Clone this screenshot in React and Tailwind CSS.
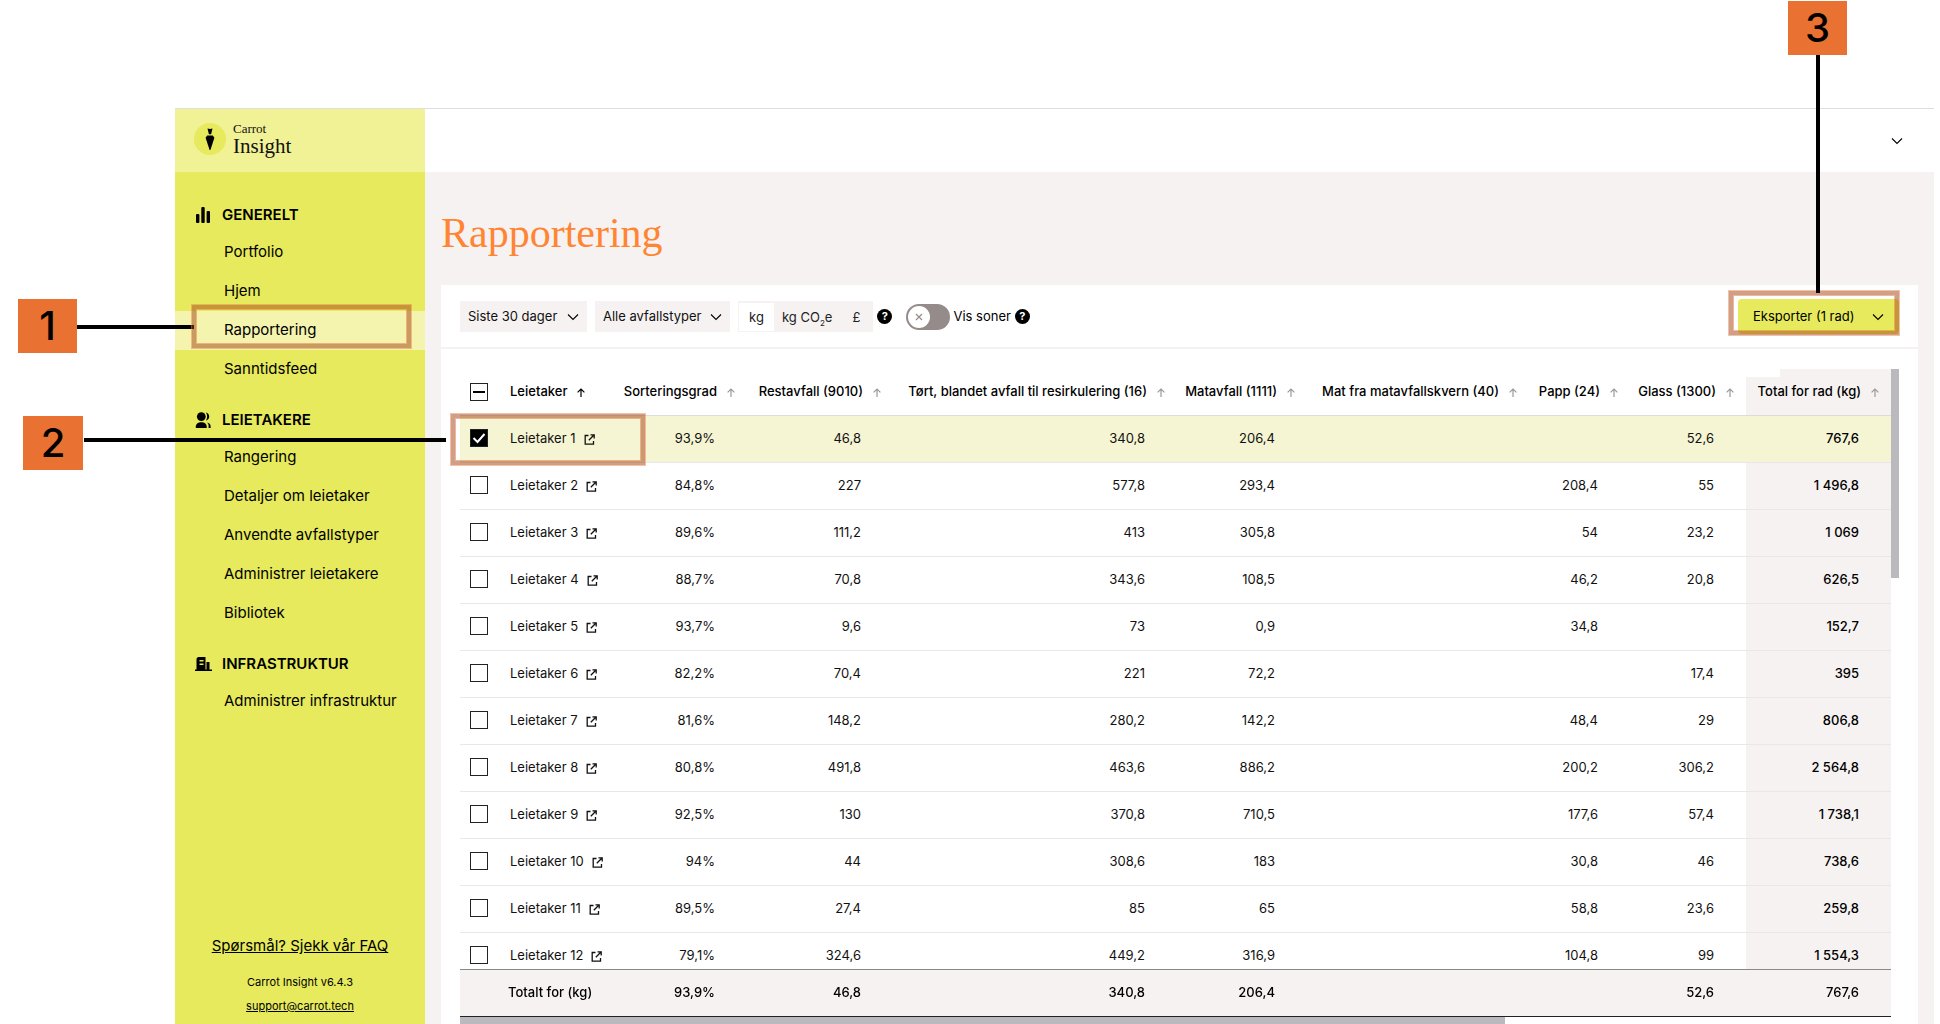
const menu = [
    {
        title: 'GENERELT',
        icon: ChartIcon,
        items: ['Portfolio', 'Hjem', 'Rapportering', 'Sanntidsfeed'],
    },
    {
        title: 'LEIETAKERE',
        icon: PeopleIcon,
        items: ['Rangering', 'Detaljer om leietaker', 'Anvendte avfallstyper', 'Administrer leietakere', 'Bibliotek'],
    },
    {
        title: 'INFRASTRUKTUR',
        icon: BuildingIcon,
        items: ['Administrer infrastruktur'],
    },
];

const columns = [
    'Sorteringsgrad',
    'Restavfall (9010)',
    'Tørt, blandet avfall til resirkulering (16)',
    'Matavfall (1111)',
    'Mat fra matavfallskvern (40)',
    'Papp (24)',
    'Glass (1300)',
    'Total for rad (kg)',
];

const rows = [
    ['Leietaker 1', '93,9%', '46,8', '340,8', '206,4', '', '', '52,6', '767,6'],
    ['Leietaker 2', '84,8%', '227', '577,8', '293,4', '', '208,4', '55', '1 496,8'],
    ['Leietaker 3', '89,6%', '111,2', '413', '305,8', '', '54', '23,2', '1 069'],
    ['Leietaker 4', '88,7%', '70,8', '343,6', '108,5', '', '46,2', '20,8', '626,5'],
    ['Leietaker 5', '93,7%', '9,6', '73', '0,9', '', '34,8', '', '152,7'],
    ['Leietaker 6', '82,2%', '70,4', '221', '72,2', '', '', '17,4', '395'],
    ['Leietaker 7', '81,6%', '148,2', '280,2', '142,2', '', '48,4', '29', '806,8'],
    ['Leietaker 8', '80,8%', '491,8', '463,6', '886,2', '', '200,2', '306,2', '2 564,8'],
    ['Leietaker 9', '92,5%', '130', '370,8', '710,5', '', '177,6', '57,4', '1 738,1'],
    ['Leietaker 10', '94%', '44', '308,6', '183', '', '30,8', '46', '738,6'],
    ['Leietaker 11', '89,5%', '27,4', '85', '65', '', '58,8', '23,6', '259,8'],
    ['Leietaker 12', '79,1%', '324,6', '449,2', '316,9', '', '104,8', '99', '1 554,3'],
];

const totals = ['93,9%', '46,8', '340,8', '206,4', '', '', '52,6', '767,6'];

function ChartIcon() {
    return (
        <svg viewBox="0 0 16 18" className="w-4 h-[18px]" aria-hidden="true">
            <rect x="1" y="8" width="3.4" height="9" rx="1" />
            <rect x="6.3" y="1" width="3.4" height="16" rx="1" />
            <rect x="11.6" y="5" width="3.4" height="12" rx="1" />
        </svg>
    );
}

function PeopleIcon() {
    return (
        <svg viewBox="0 0 16 18" className="w-4 h-[18px]" aria-hidden="true">
            <circle cx="6.3" cy="5.6" r="4.4" />
            <path d="M.8 17v-1.400C.8 12.600 3.500 11.200 6.300 11.200s5.400 1.400 5.400 4.400V17z" />
            <path d="M11 1.600c2 .4 3.200 2 3.200 4s-1.200 3.600-3.200 4c1.500-2.300 1.500-5.700 0-8z" />
            <path d="M12 11.600c2.200.5 3.600 1.500 3.600 3.400v2h-2v-2.400c0-1.200-.6-2.200-1.600-3z" />
        </svg>
    );
}

function BuildingIcon() {
    return (
        <svg viewBox="0 0 17 16" className="w-[17px] h-4 shrink-0" aria-hidden="true">
            <path
                fillRule="evenodd"
                d="M1.500 13.500V2.500L3 1h7.500v12.500h1V6h3v7.500H17V15H0v-1.500zM4.500 4v1.500h4V4zm0 3.500V9h4V7.500z"
            />
        </svg>
    );
}

function Chevron({ className = '' }) {
    return (
        <svg viewBox="0 0 12 8" className={`w-3 h-2 ${className}`} fill="none" stroke="currentColor" aria-hidden="true">
            <path d="M1 1.500l5 5 5-5" strokeWidth="1.100" />
        </svg>
    );
}

function ArrowUp({ className = '' }) {
    return (
        <svg viewBox="0 0 8 9" className={`w-2 h-[9px] shrink-0 ${className}`} fill="none" stroke="currentColor" aria-hidden="true">
            <path d="M4 9V1M.6 4.400L4 1l3.400 3.400" strokeWidth="1.200" />
        </svg>
    );
}

function ExternalIcon() {
    return (
        <svg viewBox="0 0 11 11" className="w-[11px] h-[11px]" fill="none" stroke="currentColor" strokeWidth="1.300" aria-hidden="true">
            <path d="M4.500 1.500H1.200v8.700h8.300V7M6.500.8h3.700v3.700M10 1L4.800 6.200" />
        </svg>
    );
}

function Help({ label }) {
    return (
        <button
            type="button"
            aria-label={label}
            className="w-[15px] h-[15px] rounded-full bg-black text-white text-[11px] leading-[15px] font-bold text-center"
        >
            ?
        </button>
    );
}

function Dropdown({ label, value, className }) {
    return (
        <div className="relative">
            <select
                aria-label={label}
                className={`appearance-none h-[31px] bg-[#f6f2f1] pl-2 pr-7 text-[13px] text-[#111] ${className}`}
            >
                <option>{value}</option>
            </select>
            <Chevron className="absolute right-2 top-3 pointer-events-none" />
        </div>
    );
}

function Check({ label, checked = false, mixed = false }) {
    return (
        <span className="relative block w-[18px] h-[18px]">
            <input
                type="checkbox"
                aria-label={label}
                defaultChecked={checked}
                ref={(el) => {
                    if (el) el.indeterminate = mixed;
                }}
                className="peer appearance-none block w-[18px] h-[18px] border border-[#222] checked:bg-black"
            />
            <svg
                viewBox="0 0 18 18"
                className="absolute inset-0 hidden peer-checked:block pointer-events-none"
                fill="none"
                stroke="white"
                strokeWidth="2"
            >
                <path d="M3.500 9l4 4 7-8" />
            </svg>
            {mixed && <span className="absolute left-[3px] top-2 w-3 h-[2px] bg-black pointer-events-none" />}
        </span>
    );
}

function Sidebar() {
    return (
        <aside className="w-[250px] shrink-0 flex flex-col bg-[#e6ea5c]">
            <div className="h-[63px] shrink-0 flex items-center bg-[#f1f196] pl-[19px] pb-1 gap-[7px]">
                <svg viewBox="0 0 32 32" className="w-8 h-8" aria-hidden="true">
                    <circle cx="16" cy="16" r="16" fill="#e6ea5c" />
                    <path d="M13.500 5.500l2.500.6 2.500-.6-1.400 5.700h-2.200z" />
                    <path d="M13.200 12.500h5.600l1.600 2.300L16.400 27h-.8l-4-12.200z" />
                </svg>
                <div className="font-['Liberation_Serif',serif] text-[#111]">
                    <div className="text-[13px] leading-[14px]">Carrot</div>
                    <div className="text-[21px] leading-5">Insight</div>
                </div>
            </div>
            <nav className="flex flex-col gap-[13px] pt-[25px]">
                {menu.map(({ title, icon: Icon, items }) => (
                    <section key={title}>
                        <h2 className="h-9 flex items-center gap-[11px] pl-5 text-[15px] font-semibold">
                            <span className="w-4 flex justify-center">
                                <Icon />
                            </span>
                            {title}
                        </h2>
                        <ul>
                            {items.map((item) => (
                                <li key={item}>
                                    <a
                                        href="#"
                                        className={`h-[39px] flex items-center pl-[49px] text-[15px] ${
                                            item === 'Rapportering' ? 'bg-[#f4f4ae]' : ''
                                        }`}
                                    >
                                        {item}
                                    </a>
                                </li>
                            ))}
                        </ul>
                    </section>
                ))}
            </nav>
            <div className="mt-auto pb-[10px] flex flex-col items-center text-[11px]">
                <a href="#" className="text-[15px] leading-6 underline mb-4">
                    Spørsmål? Sjekk vår FAQ
                </a>
                <span className="leading-4 mb-2">Carrot Insight v6.4.3</span>
                <a href="#" className="leading-4 underline">
                    support@carrot.tech
                </a>
            </div>
        </aside>
    );
}

function Toolbar() {
    return (
        <div className="h-[64px] shrink-0 flex items-start pt-4 pl-[19px] pr-[19px] border-b-2 border-[#f6f2f1] text-[13px]">
            <div className="flex items-center gap-2">
                <Dropdown label="Periode" value="Siste 30 dager" className="w-[127px]" />
                <Dropdown label="Avfallstype" value="Alle avfallstyper" className="w-[135px]" />
                <div className="h-[31px] flex items-center gap-2 p-px bg-[#f6f2f1] text-[#222]">
                    <button type="button" className="h-7 w-[35px] pt-[2px] bg-white">kg</button>
                    <button type="button" className="h-7 pt-[2px]">
                        kg CO<sub className="text-[8px] -bottom-1">2</sub>e
                    </button>
                    <button type="button" className="h-7 w-8 pt-[2px]">£</button>
                </div>
            </div>
            <div className="h-[31px] flex items-center pl-1">
                <Help label="Om enheter" />
                <label className="flex items-center gap-[3px] ml-[14px] mr-1">
                    <span className="relative block w-11 h-[26px]">
                        <input
                            type="checkbox"
                            role="switch"
                            className="appearance-none block w-11 h-[26px] rounded-full bg-[#958b8a]"
                        />
                        <span className="absolute left-[2px] top-[2px] w-[22px] h-[22px] rounded-full bg-white flex items-center justify-center pointer-events-none">
                            <svg viewBox="0 0 8 8" className="w-2 h-2" stroke="#958b8a" strokeWidth="1.200">
                                <path d="M1 1l6 6M7 1L1 7" />
                            </svg>
                        </span>
                    </span>
                    Vis soner
                </label>
                <Help label="Om soner" />
            </div>
            <button
                type="button"
                className="ml-auto -mt-[2px] h-[35px] w-[161px] rounded bg-[#e6ea5c] flex items-center justify-between pl-[15px] pr-[15px]"
            >
                Eksporter (1 rad)
                <Chevron />
            </button>
        </div>
    );
}

function ReportTable() {
    return (
        <table className="w-full table-fixed border-separate border-spacing-0 text-[13px] text-[#111]">
            <colgroup>
                <col className="w-[40px]" />
                <col className="w-[112px]" />
                <col className="w-[135px]" />
                <col className="w-[146px]" />
                <col className="w-[284px]" />
                <col className="w-[130px]" />
                <col className="w-[222px]" />
                <col className="w-[101px]" />
                <col className="w-[116px]" />
                <col className="w-[145px]" />
            </colgroup>
            <thead>
                <tr className="h-[47px]">
                    <th className="p-0 pl-[10px] border-b border-[#dcdcdc]">
                        <Check label="Velg alle" mixed />
                    </th>
                    <th className="p-0 pl-[10px] border-b border-[#dcdcdc] font-medium text-black">
                        <span className="flex items-center gap-[10px]">
                            Leietaker
                            <ArrowUp />
                        </span>
                    </th>
                    {columns.map((name, i) => (
                        <th
                            key={name}
                            className={`p-0 pr-3 border-b border-[#dcdcdc] font-medium text-black whitespace-nowrap ${
                                i === columns.length - 1 ? 'relative bg-[#f6f2f1]' : ''
                            }`}
                        >
                            {i === columns.length - 1 && <span className="absolute left-0 top-0 w-[34px] h-2 bg-white" />}
                            <span className="flex items-center justify-end gap-[10px]">
                                {name}
                                <ArrowUp className="text-[#a09898]" />
                            </span>
                        </th>
                    ))}
                </tr>
            </thead>
            <tbody>
                {rows.map(([name, ...values], r) => (
                    <tr key={name} className={`h-[47px] ${r === 0 ? 'bg-[#f5f5d4]' : ''}`}>
                        <td className="p-0 pl-[10px] pb-[2px] border-b border-[#e9e7e7]">
                            <Check label={name} checked={r === 0} />
                        </td>
                        <td className="p-0 pl-[10px] border-b border-[#e9e7e7]">
                            <a href="#" className="flex items-center gap-2">
                                {name}
                                <ExternalIcon />
                            </a>
                        </td>
                        {values.map((value, i) => (
                            <td
                                key={i}
                                className={`p-0 pr-8 border-b border-[#e9e7e7] text-right ${
                                    i === values.length - 1 ? 'font-medium text-black' : ''
                                } ${i === values.length - 1 && r > 0 ? 'bg-[#f6f2f1]' : ''}`}
                            >
                                {value}
                            </td>
                        ))}
                    </tr>
                ))}
            </tbody>
            <tfoot className="sticky bottom-0">
                <tr className="h-12 bg-[#f6f2f1] font-medium text-black">
                    <td className="border-t border-t-[#888] border-b border-b-[#222]" />
                    <td className="p-0 pl-2 border-t border-t-[#888] border-b border-b-[#222]">Totalt for (kg)</td>
                    {totals.map((value, i) => (
                        <td key={i} className="p-0 pr-8 text-right border-t border-t-[#888] border-b border-b-[#222]">
                            {value}
                        </td>
                    ))}
                </tr>
            </tfoot>
        </table>
    );
}

function Badge({ children, className }) {
    return (
        <div className={`absolute h-[54px] bg-[#e97132] text-black text-[40px] leading-[54px] font-medium text-center ${className}`}>
            {children}
        </div>
    );
}

function Frame({ className }) {
    return (
        <div
            className={`absolute border-4 border-[#9f4111]/50 ring-1 ring-[#f08050]/50 pointer-events-none ${className}`}
        >
            <div className="w-full h-full border border-[#f08050]/60" />
        </div>
    );
}

export default function App() {
    return (
        <div className="relative h-screen flex bg-white pt-[108px] pl-[175px] pr-[6px] overflow-hidden font-[Inter,sans-serif] text-black">
            <div className="flex-1 min-w-0 flex border-t border-[#dedede]">
                <Sidebar />
                <div className="flex-1 min-w-0 flex flex-col bg-[#f6f2f1]">
                    <header className="h-[63px] shrink-0 bg-white flex items-center justify-end pr-[31px]">
                        <button type="button" aria-label="Konto">
                            <Chevron />
                        </button>
                    </header>
                    <main className="flex-1 min-h-0 flex flex-col pl-4 pr-4">
                        <h1 className="h-[113px] shrink-0 pt-[35px] font-['Liberation_Serif',serif] text-[42px] leading-[52px] text-[#ff8533]">
                            Rapportering
                        </h1>
                        <div className="flex-1 min-h-0 flex flex-col bg-white">
                            <Toolbar />
                            <div className="flex-1 min-h-0 flex pt-5 pl-[19px] pr-[19px]">
                                <div className="flex-1 min-w-0 flex flex-col">
                                    <div className="flex-1 min-h-0 overflow-hidden">
                                        <ReportTable />
                                    </div>
                                    <div className="h-[7px] shrink-0">
                                        <div className="h-full w-[73%] bg-[#bab9be]" />
                                    </div>
                                </div>
                                <div className="w-2 h-[209px] bg-[#bab9be]" />
                            </div>
                        </div>
                    </main>
                </div>
            </div>

            <Badge className="left-[18px] top-[299px] w-[59px]">1</Badge>
            <div className="absolute left-[77px] top-[325px] w-[117px] h-1 bg-black" />
            <Frame className="left-[192px] top-[305px] w-[219px] h-[43px]" />

            <Badge className="left-[23px] top-[416px] w-[60px]">2</Badge>
            <div className="absolute left-[84px] top-[438px] w-[362px] h-1 bg-black" />
            <Frame className="left-[451px] top-[414px] w-[194px] h-[51px]" />

            <Badge className="right-[93px] top-px w-[59px]">3</Badge>
            <Frame className="right-[41px] top-[291px] w-[170px] h-[44px]" />
            <div className="absolute right-[120px] top-[55px] w-1 h-[238px] bg-black" />
        </div>
    );
}
